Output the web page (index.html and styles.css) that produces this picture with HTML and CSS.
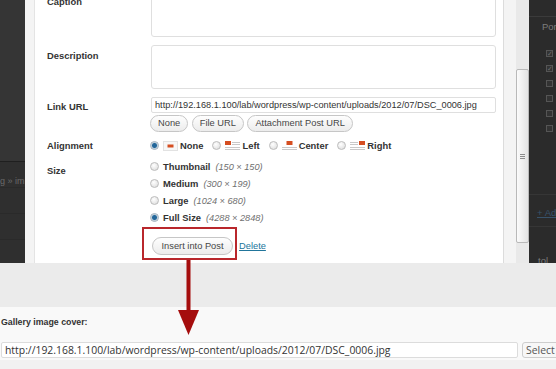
FILE: index.html
```html
<!DOCTYPE html>
<html lang="en">

<head>
    <meta charset="utf-8">
    <title>Insert into Post</title>
    <link rel="stylesheet" href="styles.css">
</head>

<body>

    <div class="screen">
        <div class="top">
            <div class="backdrop left-side">
                <div class="ls-head"></div>
                <div class="ls-row ls-text">g » im</div>
                <div class="ls-row"></div>
                <div class="ls-row"></div>
            </div>

            <div class="modal">
                <div class="panel">
                    <div class="form">
                        <div class="row row-area row-caption">
                            <div class="label">Caption</div>
                            <textarea class="textbox"></textarea>
                        </div>
                        <div class="row row-area">
                            <div class="label">Description</div>
                            <textarea class="textbox"></textarea>
                        </div>
                        <div class="row row-url">
                            <div class="label">Link URL</div>
                            <div class="field">
                                <input class="url" type="text"
                                    value="http://192.168.1.100/lab/wordpress/wp-content/uploads/2012/07/DSC_0006.jpg">
                                <div class="url-buttons">
                                    <button class="pill">None</button>
                                    <button class="pill">File URL</button>
                                    <button class="pill">Attachment Post URL</button>
                                </div>
                            </div>
                        </div>
                        <div class="row row-align">
                            <div class="label">Alignment</div>
                            <div class="field options-inline">
                                <span class="opt">
                                    <span class="radio on"></span>
                                    <svg class="align-icon" width="15" height="10" viewBox="0 0 15 10">
                                        <rect x="0.5" y="0.5" width="14" height="9" fill="#f7f7f7" stroke="#e2e2e2"/>
                                        <rect x="4.5" y="3.5" width="6" height="3" fill="#d54e21"/>
                                    </svg>
                                    <b>None</b>
                                </span>
                                <span class="opt">
                                    <span class="radio"></span>
                                    <svg class="align-icon" width="15" height="10" viewBox="0 0 15 10">
                                        <rect x="0" y="0" width="6" height="4" fill="#d54e21"/>
                                        <rect x="7" y="1" width="8" height="1" fill="#c9c9c9"/>
                                        <rect x="7" y="3" width="8" height="1" fill="#c9c9c9"/>
                                        <rect x="0" y="6" width="15" height="1" fill="#c9c9c9"/>
                                        <rect x="0" y="8" width="15" height="1" fill="#c9c9c9"/>
                                    </svg>
                                    <b>Left</b>
                                </span>
                                <span class="opt">
                                    <span class="radio"></span>
                                    <svg class="align-icon" width="15" height="10" viewBox="0 0 15 10">
                                        <rect x="4.5" y="0" width="6" height="4" fill="#d54e21"/>
                                        <rect x="0" y="6" width="15" height="1" fill="#c9c9c9"/>
                                        <rect x="0" y="8" width="15" height="1" fill="#c9c9c9"/>
                                    </svg>
                                    <b>Center</b>
                                </span>
                                <span class="opt">
                                    <span class="radio"></span>
                                    <svg class="align-icon" width="15" height="10" viewBox="0 0 15 10">
                                        <rect x="9" y="0" width="6" height="4" fill="#d54e21"/>
                                        <rect x="0" y="1" width="8" height="1" fill="#c9c9c9"/>
                                        <rect x="0" y="3" width="8" height="1" fill="#c9c9c9"/>
                                        <rect x="0" y="6" width="15" height="1" fill="#c9c9c9"/>
                                        <rect x="0" y="8" width="15" height="1" fill="#c9c9c9"/>
                                    </svg>
                                    <b>Right</b>
                                </span>
                            </div>
                        </div>
                        <div class="row row-size">
                            <div class="label">Size</div>
                            <div class="field">
                                <div class="size-opt"><span class="radio"></span><b>Thumbnail</b><i>(150 × 150)</i></div>
                                <div class="size-opt"><span class="radio"></span><b>Medium</b><i>(300 × 199)</i></div>
                                <div class="size-opt"><span class="radio"></span><b>Large</b><i>(1024 × 680)</i></div>
                                <div class="size-opt"><span class="radio on"></span><b>Full Size</b><i>(4288 × 2848)</i></div>
                            </div>
                        </div>
                        <div class="row row-submit">
                            <div class="label"></div>
                            <div class="field">
                                <button class="pill insert">Insert into Post</button>
                                <a class="delete" href="#">Delete</a>
                            </div>
                        </div>
                    </div>
                </div>
                <div class="spacer"></div>
                <div class="scrollbar">
                    <div class="thumb"><span class="grip"></span></div>
                </div>
            </div>

            <div class="backdrop right-side">
                <div class="rs-head"></div>
                <div class="rs-text">Por</div>
                <div class="rs-checks">
                    <span class="check on">✓</span>
                    <span class="check on">✓</span>
                    <span class="check"></span>
                    <span class="check"></span>
                    <span class="check"></span>
                    <span class="check"></span>
                </div>
                <div class="rs-line"></div>
                <div class="rs-link">+ Add</div>
                <div class="rs-line"></div>
                <div class="rs-text rs-foot">tol</div>
            </div>
        </div>

        <div class="band"></div>

        <div class="meta">
            <div class="meta-label">Gallery image cover:</div>
            <div class="meta-field">
                <input class="meta-url" type="text"
                    value="http://192.168.1.100/lab/wordpress/wp-content/uploads/2012/07/DSC_0006.jpg">
                <button class="select">Select</button>
            </div>
        </div>

        <!-- annotation drawn over the screenshot -->
        <div class="mark-box"></div>
        <svg class="mark-arrow" width="26" height="80" viewBox="0 0 26 80">
            <rect x="10.5" y="2" width="4" height="51" fill="#a50d0d"/>
            <polygon points="2,52 23,52 12.5,77" fill="#a50d0d"/>
        </svg>
    </div>

</body>

</html>
```

FILE: styles.css
```css
* {
    box-sizing: border-box;
}

body {
    margin: 0;
    font-family: "Liberation Sans", Arial, sans-serif;
    color: #333;
    background: #f1f1f1;
}

.screen {
    position: relative;
    width: 556px;
    height: 369px;
    overflow: hidden;
    display: flex;
    flex-direction: column;
}

.top {
    display: flex;
    height: 263px;
    flex-shrink: 0;
}

/* dark overlay on both sides */
.backdrop {
    background: #2f2f2f;
    overflow: hidden;
    font-size: 9px;
}

.left-side {
    width: 25px;
}

.ls-head {
    height: 162px;
    background: #353535;
    border-bottom: 1px solid #1f1f1f;
}

.ls-row {
    height: 26px;
    border-bottom: 1px solid #2a2a2a;
}

.ls-text {
    color: #6a6a6a;
    text-align: right;
    padding: 14px 1px 0 0;
    white-space: nowrap;
}

.right-side {
    width: 27px;
    background: #2b2b2b;
}

.rs-head {
    height: 17px;
    border-bottom: 1px solid #3b3b3b;
}

.rs-text {
    color: #7c7c7c;
    font-size: 9.5px;
    padding: 4px 0 0 13px;
}

.rs-checks {
    display: flex;
    flex-direction: column;
    gap: 8px;
    padding: 18px 0 0 17px;
}

.check {
    width: 7px;
    height: 7px;
    border: 1px solid #555;
    background: #333;
    color: #6c6c6c;
    font-size: 7px;
    line-height: 5px;
}

.rs-line {
    margin-top: 62px;
    border-top: 1px solid #363636;
}

.rs-link {
    color: #38536b;
    text-decoration: underline;
    font-size: 9.5px;
    padding: 12px 0 0 8px;
    white-space: nowrap;
}

.rs-link + .rs-line {
    margin-top: 8px;
}

.rs-foot {
    padding: 28px 0 0 9px;
}

/* media modal */
.modal {
    width: 504px;
    display: flex;
    background: #f4f4f4;
    padding-left: 9px;
}

.panel {
    width: 470px;
    background: #fff;
    border-left: 1px solid #e4e4e4;
    border-right: 1px solid #dcdcdc;
    padding: 0 7px 0 12px;
    overflow: hidden;
}

.spacer {
    width: 12px;
}

.scrollbar {
    width: 13px;
    background: #e9e9e9;
    padding-top: 69px;
}

.thumb {
    height: 174px;
    border: 1px solid #b9b9b9;
    border-radius: 2px;
    background: linear-gradient(to right, #fbfbfb, #e3e3e3);
    display: flex;
    align-items: center;
    justify-content: center;
}

.grip {
    width: 5px;
    height: 5px;
    border-top: 1px solid #8c8c8c;
    border-bottom: 1px solid #8c8c8c;
    background: linear-gradient(#8c8c8c, #8c8c8c) center / 5px 1px no-repeat;
}

.form {
    margin-top: -7px;
}

.row {
    display: flex;
}

.label {
    width: 104px;
    flex-shrink: 0;
    font-weight: bold;
    font-size: 9.4px;
    line-height: 11px;
    color: #333;
}

.field {
    width: 345px;
}

.row-area {
    margin-bottom: 8px;
}

.row-area .label {
    padding-top: 5px;
}

.row-caption .label {
    padding-top: 3px;
}

.textbox {
    display: block;
    width: 345px;
    height: 44px;
    border: 1px solid #dfdfdf;
    border-radius: 3px;
    resize: none;
    margin: 0;
    background: #fff;
}

.row-url .label {
    padding-top: 3.5px;
}

.url {
    display: block;
    width: 345px;
    height: 16px;
    margin: 0;
    border: 1px solid #dfdfdf;
    border-radius: 2px;
    padding: 0 3px;
    font-family: "Liberation Sans", Arial, sans-serif;
    font-size: 9.2px;
    color: #333;
    outline: none;
}

.url-buttons {
    display: flex;
    gap: 3.5px;
    margin-top: 2px;
    margin-left: -1px;
}

.pill {
    height: 17px;
    padding: 0 7px;
    border: 1px solid #c6c6c6;
    border-radius: 9px;
    background: linear-gradient(#fefefe, #ececec);
    font-family: "Liberation Sans", Arial, sans-serif;
    font-size: 9.3px;
    color: #464646;
    line-height: 15px;
}

.row-align {
    margin-top: 5px;
    height: 17px;
}

.row-align .label {
    line-height: 17px;
}

.options-inline {
    display: flex;
    align-items: center;
    margin-left: -1px;
}

.opt {
    display: flex;
    align-items: center;
    margin-right: 9px;
    font-size: 9.4px;
}

.align-icon {
    margin: 0 2px 0 4px;
}

.radio {
    display: inline-block;
    width: 9px;
    height: 9px;
    border-radius: 50%;
    border: 1px solid #bcbcbc;
    background: radial-gradient(circle at 40% 35%, #ffffff, #d9d9d9);
    flex-shrink: 0;
}

.radio.on {
    border-color: #9fb0bd;
    background: radial-gradient(circle, #23679a 0 2px, #9fbcd2 2.8px, #ececec 3.4px, #d2d2d2 100%);
}

.row-size {
    margin-top: 4px;
}

.row-size .label {
    padding-top: 6.5px;
}

.size-opt {
    display: flex;
    align-items: center;
    height: 17px;
    margin-left: -1px;
    font-size: 9.4px;
}

.size-opt .radio {
    margin-right: 4px;
}

.size-opt i {
    margin-left: 5px;
    color: #707070;
    font-size: 9.2px;
}

.row-submit {
    margin-top: 11px;
}

.row-submit .field {
    display: flex;
    align-items: center;
}

.insert {
    height: 18px;
    padding: 0 8.5px;
    margin-left: 1px;
    line-height: 16px;
}

.delete {
    margin-left: 6px;
    color: #21759b;
    font-size: 9.3px;
}

/* lower part of the page */
.band {
    height: 44px;
    flex-shrink: 0;
    background: #ebebeb;
}

.meta {
    flex: 1;
    background: #f9f9f9;
    padding: 10px 0 0 1px;
    border-bottom: 9px solid #f1f1f1;
}

.meta-label {
    font-weight: bold;
    font-size: 8.8px;
    line-height: 11px;
    color: #333;
}

.meta-field {
    display: flex;
    gap: 4px;
    margin-top: 14px;
}

.meta-url {
    width: 517px;
    flex-shrink: 0;
    height: 16px;
    margin: 0;
    padding: 0 3px;
    border: 1px solid #dcdcdc;
    border-radius: 2px;
    background: #fff;
    font-family: "Open Sans", sans-serif;
    font-size: 10.4px;
    color: #333;
    outline: none;
}

.select {
    flex-shrink: 0;
    height: 16px;
    padding: 0 3px;
    border: 1px solid #cdcdcd;
    border-radius: 3px;
    background: #f7f7f7;
    font-family: "Open Sans", sans-serif;
    font-size: 10.4px;
    color: #555;
    line-height: 14px;
}

/* red annotation over the screenshot */
.mark-box {
    position: absolute;
    left: 142px;
    top: 227px;
    width: 95px;
    height: 33px;
    border: 2px solid #b9272c;
}

.mark-arrow {
    position: absolute;
    left: 176px;
    top: 258px;
}
```
